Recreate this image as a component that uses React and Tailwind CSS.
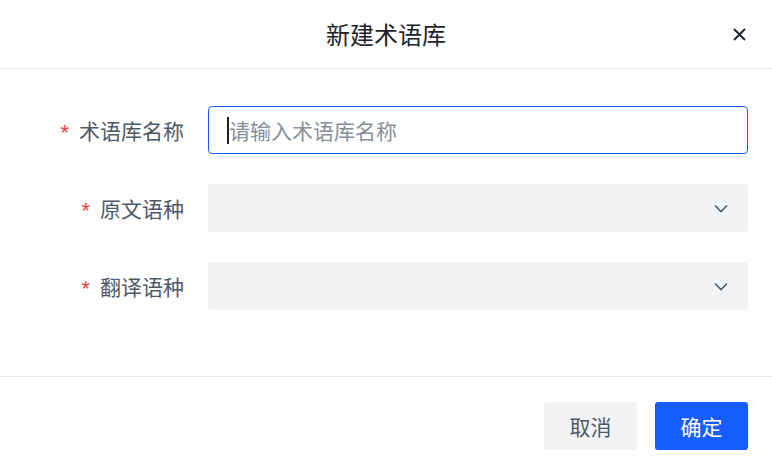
import React from "react";

const font = { fontFamily: '"Noto Sans CJK SC", "Noto Sans", sans-serif' };

function Chevron() {
  return (
    <svg width="14" height="9" viewBox="0 0 14 9" fill="none">
      <path d="M1 1.5 L7 7.5 L13 1.5" stroke="#4e5969" strokeWidth="1.6" />
    </svg>
  );
}

function Label({ children }) {
  return (
    <div className="w-[184px] shrink-0 flex items-center justify-end text-[21px] text-[#4e5969] leading-none">
      <span className="text-[#f53f3f] text-[22px] mr-[10px] leading-none translate-y-[3px] font-[Liberation_Sans]">*</span>
      <span>{children}</span>
    </div>
  );
}

export default function App() {
  return (
    <div className="w-[772px] h-[464px] bg-white flex flex-col" style={font}>
      <div className="h-[69px] shrink-0 border-b border-[#e5e6eb] relative flex items-center justify-center">
        <span className="text-[24px] text-[#1d2129] leading-none">新建术语库</span>
        <button className="absolute right-[26px] top-[27px] w-[14px] h-[14px] flex items-center justify-center">
          <svg width="13" height="13" viewBox="0 0 13 13">
            <path d="M1 1 L12 12 M12 1 L1 12" stroke="#1d2129" strokeWidth="1.8" />
          </svg>
        </button>
      </div>
      <div className="flex-1 flex flex-col gap-[30px] pt-[37px] pr-[24px]">
        <div className="flex items-center gap-[24px] h-[48px]">
          <Label>术语库名称</Label>
          <div className="flex-1 h-[48px] rounded-[4px] border border-[#165dff] flex items-center pl-[18px]">
            <span className="w-[2px] h-[27px] bg-[#1d2129]" />
            <span className="text-[21px] text-[#86909c] leading-none">请输入术语库名称</span>
          </div>
        </div>
        <div className="flex items-center gap-[24px] h-[48px]">
          <Label>原文语种</Label>
          <div className="flex-1 h-[48px] rounded-[4px] bg-[#f2f3f5] flex items-center justify-end pr-[20px]">
            <Chevron />
          </div>
        </div>
        <div className="flex items-center gap-[24px] h-[48px]">
          <Label>翻译语种</Label>
          <div className="flex-1 h-[48px] rounded-[4px] bg-[#f2f3f5] flex items-center justify-end pr-[20px]">
            <Chevron />
          </div>
        </div>
      </div>
      <div className="h-[88px] shrink-0 border-t border-[#e5e6eb] flex justify-end items-start pt-[25px] pr-[24px] gap-[18px]">
        <button className="w-[93px] h-[48px] rounded-[3px] bg-[#f2f3f5] text-[#4e5969] text-[21px] leading-none">取消</button>
        <button className="w-[93px] h-[48px] rounded-[3px] bg-[#165dff] text-white text-[21px] leading-none">确定</button>
      </div>
    </div>
  );
}
